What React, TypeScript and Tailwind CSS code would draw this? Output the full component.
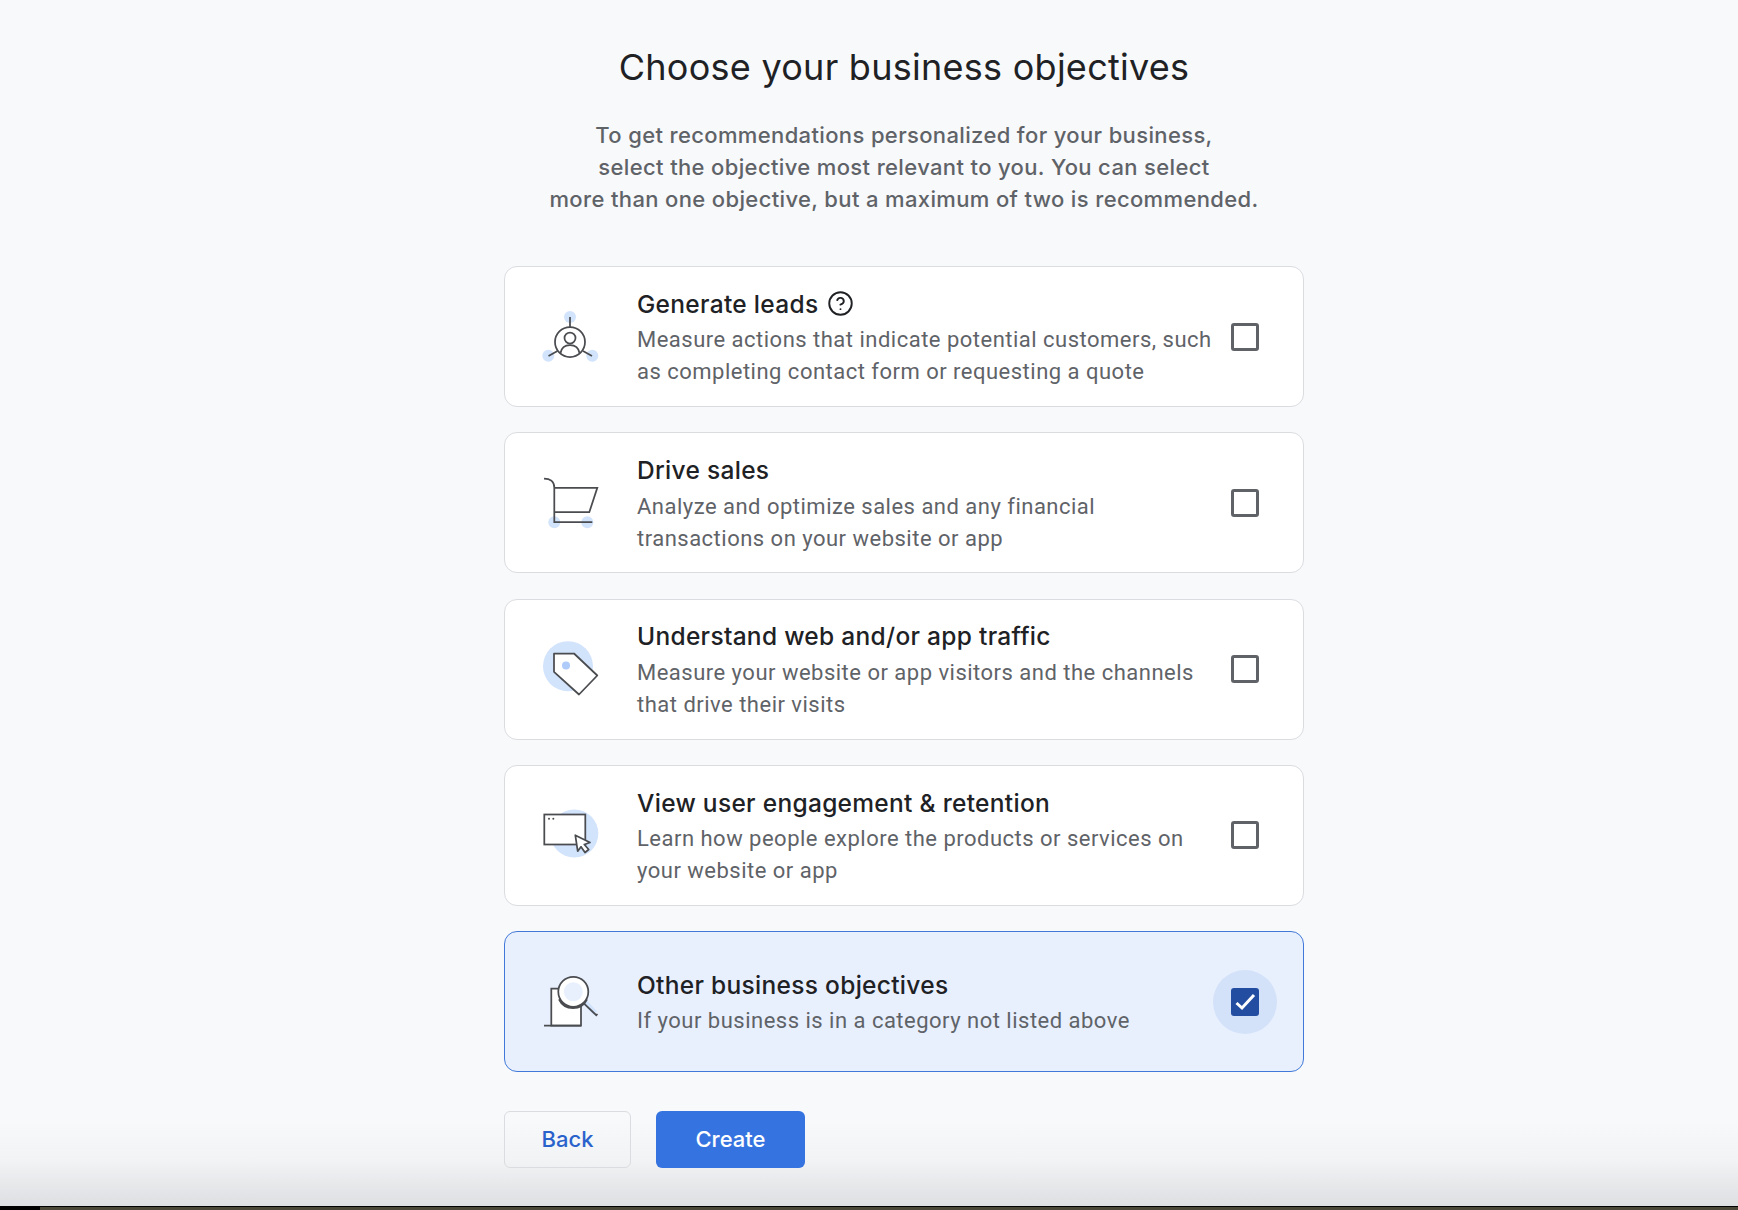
import { CircleHelp } from 'lucide-react';
import type { ReactNode } from 'react';

const STROKE = '#4a4c50';
const BLUE = '#d2e3fc';

function LeadsIcon() {
  return (
    <svg width="60" height="60" viewBox="0 0 60 60" fill="none" stroke={STROKE} strokeWidth="1.75">
      <circle cx="30" cy="10" r="6" fill={BLUE} stroke="none" />
      <circle cx="8.3" cy="48.8" r="6" fill={BLUE} stroke="none" />
      <circle cx="52.3" cy="48.8" r="6" fill={BLUE} stroke="none" />
      <path d="M30 10v10M8.5 49l9-5M52 49l-9-5" />
      <circle cx="30" cy="35" r="15" />
      <circle cx="30" cy="31" r="5.5" />
      <path d="M20.5 46c1-6 5-8 9.500-8s8.500 2 9.500 8" />
    </svg>
  );
}

function CartIcon() {
  return (
    <svg width="60" height="60" viewBox="0 0 60 60" fill="none" stroke={STROKE} strokeWidth="1.75">
      <circle cx="14.300" cy="49.200" r="6" fill={BLUE} stroke="none" />
      <circle cx="47.300" cy="49.200" r="6" fill={BLUE} stroke="none" />
      <path d="M4 5.500c6 0 10.300 3 10.300 9v34.700h38" />
      <path d="M14.300 14.800h43l-8 24.400h-35" />
    </svg>
  );
}

function TagIcon() {
  return (
    <svg width="60" height="60" viewBox="0 0 60 60" fill="none" stroke={STROKE} strokeWidth="1.75">
      <circle cx="28" cy="27.200" r="25" fill={BLUE} stroke="none" />
      <path d="M14 14.500h20l23.300 22-18.300 19-25-22.700z" fill="#fff" strokeLinejoin="round" />
      <circle cx="26" cy="26.500" r="4" fill="#aecbfa" stroke="none" />
    </svg>
  );
}

function WindowIcon() {
  return (
    <svg width="60" height="60" viewBox="0 0 60 60" fill="none" stroke={STROKE} strokeWidth="1.75">
      <circle cx="34.300" cy="28.500" r="24" fill={BLUE} stroke="none" />
      <rect x="4.300" y="9.500" width="41" height="30" fill="#fff" />
      <circle cx="9" cy="13.800" r="1" fill={STROKE} stroke="none" />
      <circle cx="13.300" cy="13.800" r="1" fill={STROKE} stroke="none" />
      <path d="M35.300 30.200l2.400 16 3.300-4.400 4 5.700 3.700-3-4.400-5 5.700-2z" fill="#fff" strokeLinejoin="round" />
    </svg>
  );
}

function SearchIcon() {
  return (
    <svg width="60" height="60" viewBox="0 0 60 60" fill="none" stroke={STROKE} strokeWidth="1.75">
      <path d="M11.300 53.500V16.500H41v37z" fill="#fff" />
      <path d="M4 53.500h37" />
      <path d="M43 28l12 13" stroke={BLUE} strokeWidth="5" />
      <path d="M43.300 30.800l13 12.400 1.200-1.200" />
      <path d="M19.500 27a15 15 0 0 0 27 0" stroke={STROKE} strokeWidth="3" />
      <circle cx="33.300" cy="19.800" r="15" fill="#fff" />
      <circle cx="33.300" cy="19.800" r="9.500" fill="#e8f0fe" stroke="none" />
    </svg>
  );
}

type Objective = {
  title: ReactNode;
  lines: string[];
  icon: ReactNode;
  selected?: boolean;
};

const objectives: Objective[] = [
  {
    title: (
      <span className="flex items-center gap-[9px]">
        Generate leads
        <CircleHelp size={27} strokeWidth={1.7} color="#202124" />
      </span>
    ),
    lines: ['Measure actions that indicate potential customers, such', 'as completing contact form or requesting a quote'],
    icon: <LeadsIcon />,
  },
  {
    title: 'Drive sales',
    lines: ['Analyze and optimize sales and any financial', 'transactions on your website or app'],
    icon: <CartIcon />,
  },
  {
    title: 'Understand web and/or app traffic',
    lines: ['Measure your website or app visitors and the channels', 'that drive their visits'],
    icon: <TagIcon />,
  },
  {
    title: 'View user engagement & retention',
    lines: ['Learn how people explore the products or services on', 'your website or app'],
    icon: <WindowIcon />,
  },
  {
    title: 'Other business objectives',
    lines: ['If your business is in a category not listed above'],
    icon: <SearchIcon />,
    selected: true,
  },
];

function Checkbox({ checked }: { checked?: boolean }) {
  if (checked) {
    return (
      <span className="w-16 h-16 rounded-full bg-[#d3e1f9] flex items-center justify-center">
        <span className="w-7 h-7 rounded-[3px] bg-[#234da0] flex items-center justify-center">
          <svg width="24" height="24" viewBox="0 0 24 24" fill="none" stroke="#fff" strokeWidth="3">
            <path d="M3.500 13l5.500 5L21 5" />
          </svg>
        </span>
      </span>
    );
  }
  return <span className="w-7 h-7 rounded-[3px] border-[3px] border-[#5f6368] bg-white" />;
}

function ObjectiveCard({ item }: { item: Objective }) {
  const rowClass = item.selected
    ? 'bg-[#e8f0fe] border-[#4279d8]'
    : 'bg-white border-[#dadce0]';

  return (
    <div className={`h-[141px] rounded-[13px] border flex items-center pl-[35px] ${rowClass}`}>
      <div className="w-[60px] shrink-0">{item.icon}</div>
      <div className="ml-[37px] w-[560px] pt-[3px] shrink-0">
        <div className="font-['Inter',sans-serif] font-medium text-[24.500px] leading-8 text-[#202124] tracking-[0.3px]">
          {item.title}
        </div>
        <div className="mt-[4.500px] font-['Roboto',sans-serif] text-[22px] leading-8 text-[#5f6368] tracking-[0.49px] whitespace-nowrap">
          {item.lines.map((line) => (
            <div key={line}>{line}</div>
          ))}
        </div>
      </div>
      <div className="w-16 h-16 ml-[16px] flex items-center justify-center shrink-0">
        <Checkbox checked={item.selected} />
      </div>
    </div>
  );
}

export default function App() {
  return (
    <div className="relative h-screen overflow-hidden bg-[#f8f9fb] pl-[70px] flex flex-col items-center font-['Inter',sans-serif]">
      <h1 className="mt-[45px] text-[36px] leading-[44px] text-[#202124] tracking-[0.27px]">
        Choose your business objectives
      </h1>
      <p className="mt-[30px] text-[22px] leading-8 text-[#5f6368] text-center whitespace-nowrap tracking-[0.36px] font-medium">
        To get recommendations personalized for your business,
        <br />
        select the objective most relevant to you. You can select
        <br />
        more than one objective, but a maximum of two is recommended.
      </p>
      <div className="mt-[51px] w-[800px] flex flex-col gap-[25.250px]">
        {objectives.map((item, i) => (
          <ObjectiveCard key={i} item={item} />
        ))}
      </div>
      <div className="mt-[39px] w-[800px] flex gap-[25px] relative z-10">
        <button className="w-[127px] h-[57px] rounded-[6px] border border-[#dadce0] text-[22px] font-medium text-[#2a62cc]">
          Back
        </button>
        <button className="w-[149px] h-[57px] rounded-[6px] bg-[#3574e0] text-[22px] font-medium text-white">
          Create
        </button>
      </div>
      {/* window shadow along the bottom edge, then the dark strip of what lies below the window */}
      <div className="absolute left-0 right-0 bottom-0 h-[90px] bg-gradient-to-b from-transparent via-[#f2f3f5] via-45% to-[#dcdde0]" />
      <div className="absolute left-0 right-0 bottom-0 h-1 bg-black pl-[40px] pt-px">
        <div className="h-[3px] bg-[#4a4739]" />
      </div>
    </div>
  );
}
